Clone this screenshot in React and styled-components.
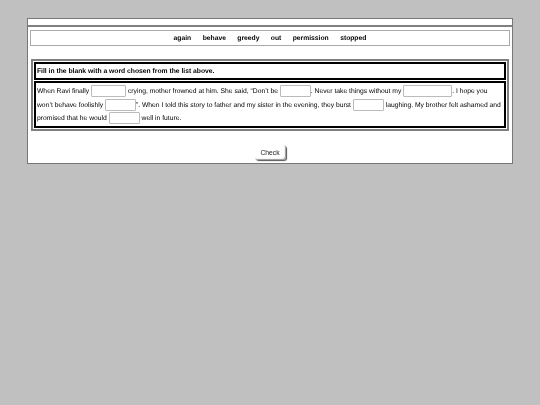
import React from 'react'
import styled, { createGlobalStyle } from 'styled-components'

const GlobalStyle = createGlobalStyle`
    html, body {
        margin: 0;
        padding: 0;
        background: #c0c0c0;
        font-family: "Liberation Sans", Arial, sans-serif;
        text-rendering: geometricPrecision;
    }
`;

const Page = styled.div`
    width: 540px;
    height: 405px;
    padding: 18px 27px 0;
    box-sizing: border-box;
`;

const Panel = styled.div`
    width: 486px;
    height: 146px;
    box-sizing: border-box;
    background: #fff;
    border: 1px solid #777;
    filter: blur(0.2px);
`;

const TopBar = styled.div`
    height: 6px;
    border-bottom: 2px solid #808080;
`;

const WordBar = styled.div`
    margin: 3px 2px 0;
    height: 16px;
    box-sizing: border-box;
    border: 1px solid #aaa;
    display: flex;
    justify-content: center;
    align-items: center;
    gap: 11.4px;
    font-size: 6.75px;
    font-weight: bold;
    color: #000;
`;

const Frame = styled.div`
    margin: 13px 3px 0;
    height: 72px;
    box-sizing: border-box;
    border: 2px solid #808080;
    padding: 1px;
    display: flex;
    flex-direction: column;
    gap: 1px;
`;

const Box = styled.div`
    border: 2px solid #000;
    box-sizing: border-box;
    padding: 0 1px;
    color: #000;
    font-size: 6.75px;
`;

const Prompt = styled(Box)`
    height: 18px;
    display: flex;
    align-items: center;
    font-weight: bold;
`;

const Passage = styled(Box)`
    flex: 1;
    padding-top: 2px;
    line-height: 13.5px;
`;

const Blank = styled.input`
    width: ${props => props.$width}px;
    height: 12px;
    box-sizing: border-box;
    margin: 0;
    padding: 0;
    vertical-align: middle;
    border: 1px solid #bbb;
    border-radius: 1px;
    background: #fff;
`;

const Actions = styled.div`
    display: flex;
    justify-content: center;
    margin-top: 14px;
`;

const CheckButton = styled.button`
    width: 31px;
    height: 15px;
    padding: 0;
    font-family: inherit;
    font-size: 6.75px;
    color: #222;
    background: #fff;
    border: none;
    border-radius: 3px;
    box-shadow: inset -1px -1px 1px #999, 1px 1px 1px #555;
`;

const words = ['again', 'behave', 'greedy', 'out', 'permission', 'stopped'];

function App() {
    return (
        <Page>
            <GlobalStyle />
            <Panel>
                <TopBar />
                <WordBar>
                    {words.map(word => <span key={word}>{word}</span>)}
                </WordBar>
                <Frame>
                    <Prompt>Fill in the blank with a word chosen from the list above.</Prompt>
                    <Passage>
                        When Ravi finally <Blank $width={35} /> crying, mother frowned at him. She said, “Don’t be <Blank $width={31} />. Never take things without my <Blank $width={49} />. I hope you won’t behave foolishly <Blank $width={31} />”. When I told this story to father and my sister in the evening, they burst <Blank $width={31} /> laughing. My brother felt ashamed and promised that he would <Blank $width={31} /> well in future.
                    </Passage>
                </Frame>
                <Actions>
                    <CheckButton>Check</CheckButton>
                </Actions>
            </Panel>
        </Page>
    )
}

export default App
